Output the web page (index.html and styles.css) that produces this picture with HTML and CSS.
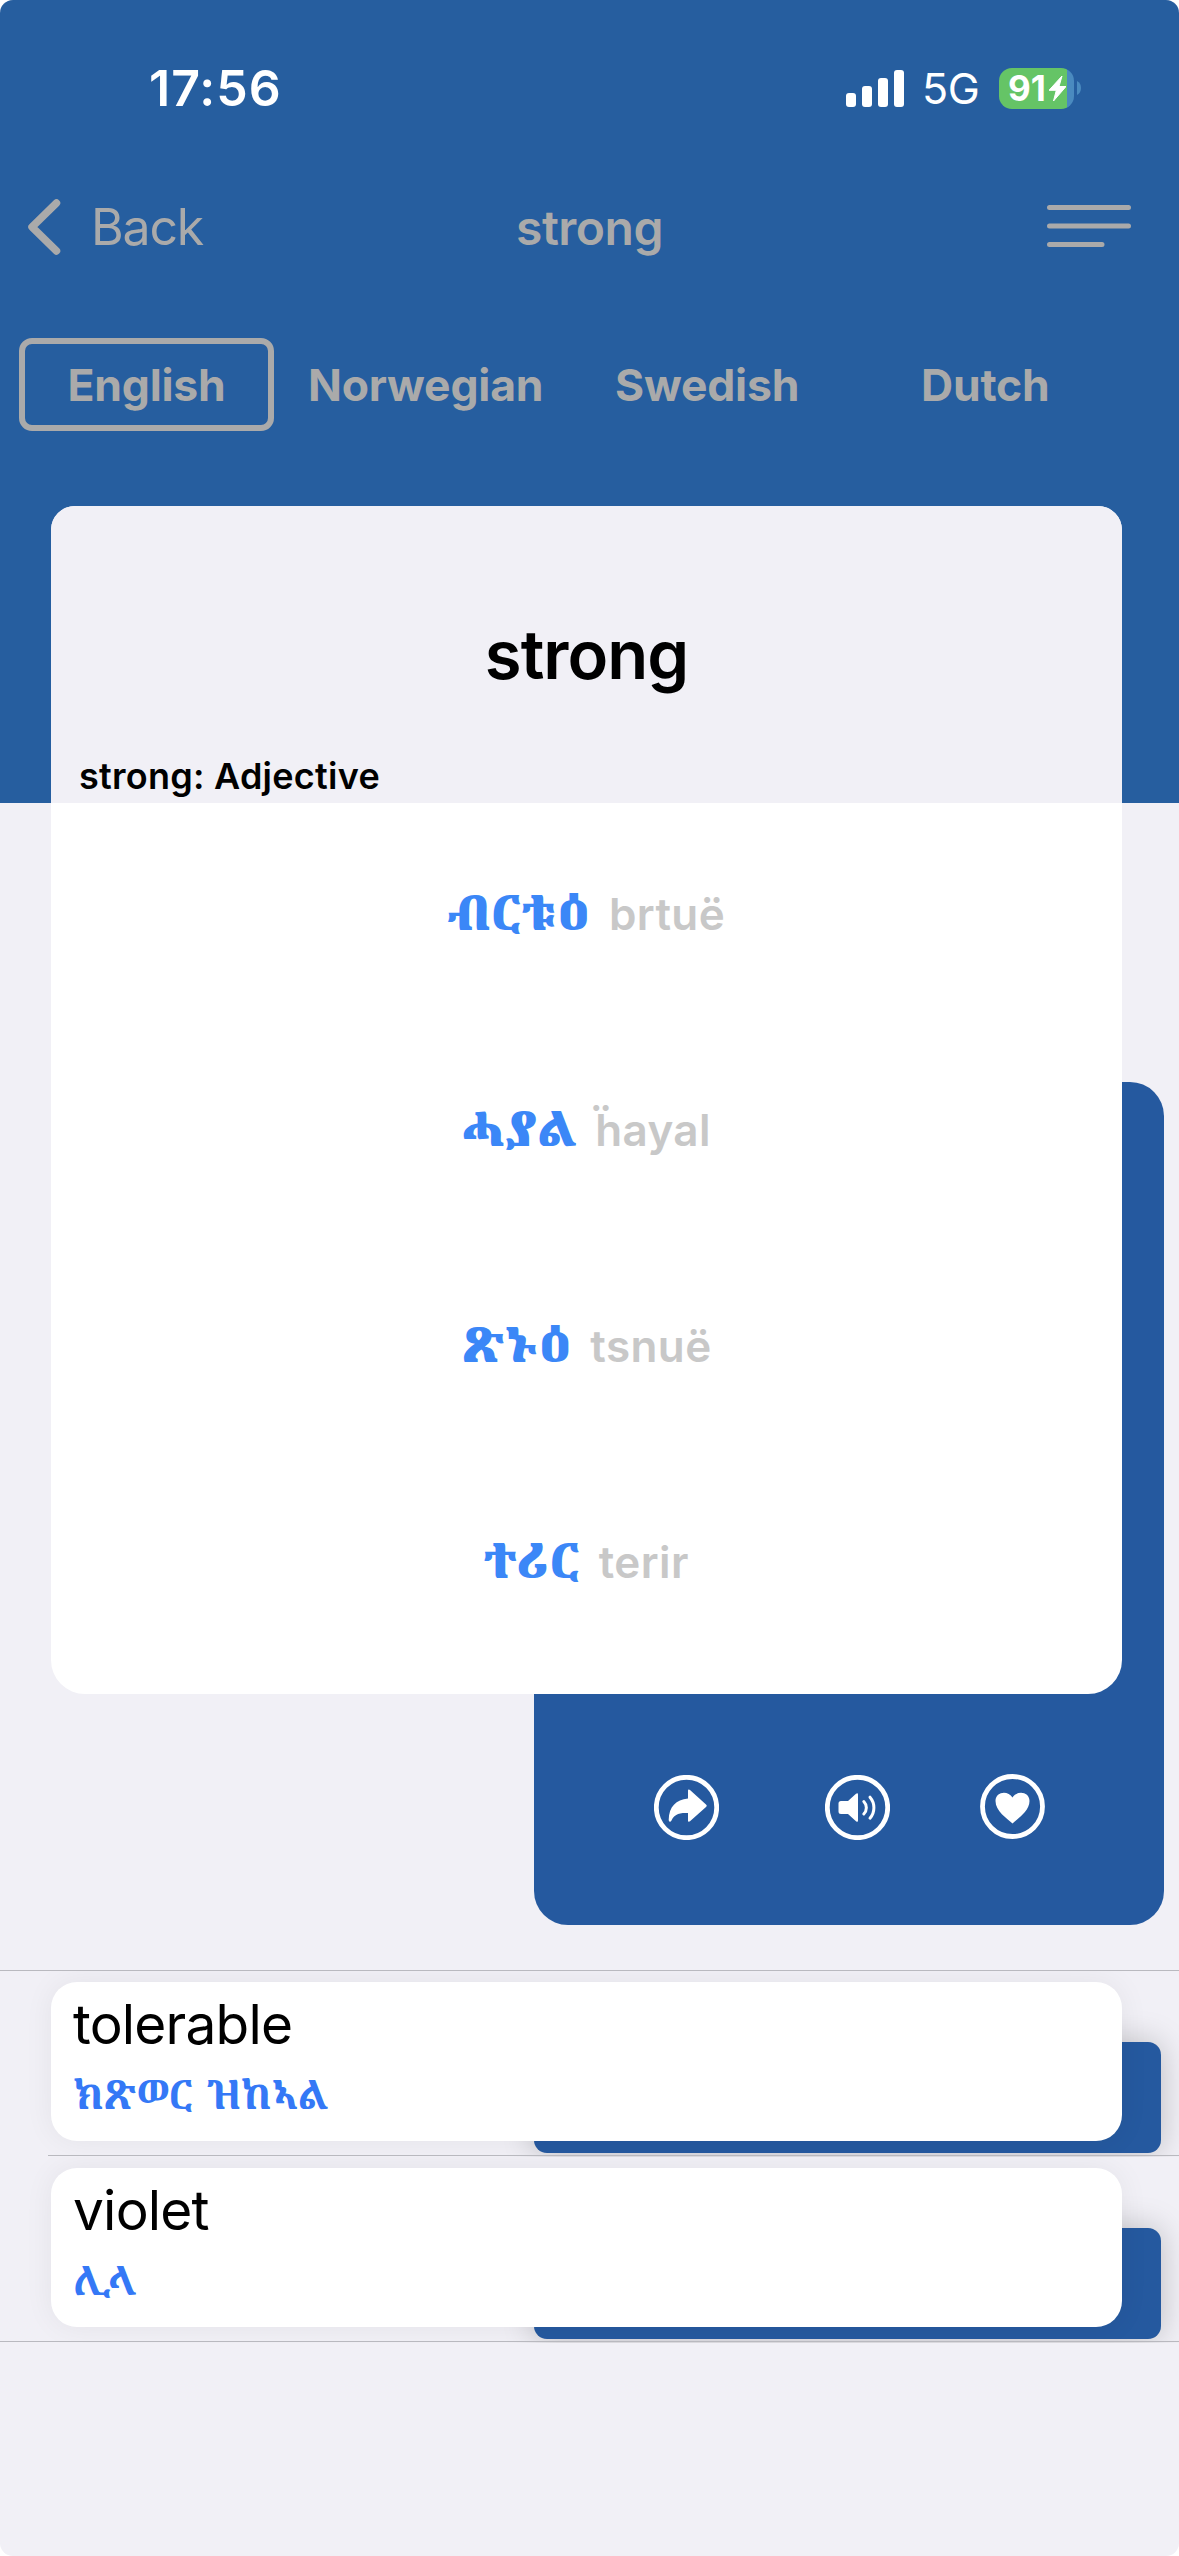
FILE: index.html
```html
<!DOCTYPE html>
<html lang="en">
<head>
<meta charset="utf-8">
<title>strong</title>
<link rel="stylesheet" href="styles.css">
</head>
<body>
<div class="screen">
  <header class="header">
    <div class="status">
      <span class="time">17:56</span>
      <div class="indicators">
        <svg class="signal" viewBox="0 0 58 37"><g fill="#fff"><rect x="0" y="23" width="10" height="14" rx="3"/><rect x="16" y="16" width="10" height="21" rx="3"/><rect x="32" y="8" width="10" height="29" rx="3"/><rect x="48" y="0" width="10" height="37" rx="3"/></g></svg>
        <span class="network">5G</span>
        <div class="battery">
          <span class="level">91</span>
          <svg class="bolt" viewBox="0 0 17 25"><path d="M13 0 0 14.300h7.300L4.500 25 17 10.500H10z" fill="#fff" stroke="#fff" stroke-width="1" stroke-linejoin="round"/></svg>
        </div>
        <svg class="nub" viewBox="0 0 4 14"><path d="M0 0Q4 2 4 7T0 14z" fill="#4a8abf"/></svg>
      </div>
    </div>
    <nav class="navbar">
      <a class="back"><svg class="chevron" viewBox="0 0 34 58"><path d="M29.500 5 5 29l24.500 24" fill="none" stroke="#aaa" stroke-width="7.500" stroke-linecap="round" stroke-linejoin="round"/></svg><span>Back</span></a>
      <h1 class="title">strong</h1>
      <svg class="menu" viewBox="0 0 84 42"><path d="M2.500 2.500h79M2.500 21h79M2.500 39.500h52.500" stroke="#aaa" stroke-width="5" stroke-linecap="round"/></svg>
    </nav>
    <div class="tabs">
      <span class="tab tab-active">English</span>
      <span class="tab norwegian">Norwegian</span>
      <span class="tab swedish">Swedish</span>
      <span class="tab dutch">Dutch</span>
    </div>
  </header>
  <main>
    <section class="featured">
      <div class="feature-card">
        <svg class="action" viewBox="0 0 65 65"><circle cx="32.500" cy="32.500" r="30.200"/><path class="solid" d="M34 16c0-1.500 1-1.800 2-.9l16 14.400c1 .9 1 1.600 0 2.500L36 46.200c-1 .9-2 .5-2-.8V38c-10-.5-14 2-16.500 7.500-1 2-2.800 1.500-2.800-.7C15 32 22 24.500 34 23.600z"/></svg>
        <svg class="action" viewBox="0 0 65 65"><circle cx="32.500" cy="32.500" r="30.200"/><path class="solid" d="M13.500 28.500q0-2.500 2.500-2.500H23l8-7.200q2-1.300 2 .7v26q0 2-2 .7L23 39h-7q-2.500 0-2.500-2.500z"/><path class="wave" d="M38.800 26.500c3.400 3.600 3.400 8.900 0 12.500M45 22.200c5.200 6 5.200 15 0 21"/></svg>
        <svg class="action" viewBox="0 0 65 65"><circle cx="32.500" cy="32.500" r="30"/><path class="solid" d="M32.500 49.500C27 44.500 15.500 37 15.500 27c0-9.500 12.500-11 17-3.500C37 16 49.500 17.500 49.500 27c0 10-11.500 17.500-17 22.500z"/></svg>
      </div>
    </section>
    <ul class="words">
      <li class="word">
        <div class="word-accent"></div>
        <div class="word-card"><span class="source">tolerable</span><span class="target" lang="ti">ክጽወር ዝከኣል</span></div>
      </li>
      <li class="word word-last">
        <div class="word-accent"></div>
        <div class="word-card"><span class="source">violet</span><span class="target" lang="ti">ሊላ</span></div>
      </li>
    </ul>
  </main>
  <section class="dialog">
    <header class="dialog-head">
      <h2 class="headword">strong</h2>
      <p class="part">strong: Adjective</p>
    </header>
    <ul class="meanings">
      <li><b lang="ti">ብርቱዕ</b><span>brtuë</span></li>
      <li><b lang="ti">ሓያል</b><span>ḧayal</span></li>
      <li><b lang="ti">ጽኑዕ</b><span>tsnuë</span></li>
      <li><b lang="ti">ተሪር</b><span>terir</span></li>
    </ul>
  </section>
</div>
</body>
</html>
```
FILE: styles.css
```css
* { box-sizing: border-box; margin: 0; padding: 0; }
body { background: #fff; font-family: Inter, "Kefa", "Noto Serif Ethiopic", "Noto Sans Ethiopic", "Noto Sans", sans-serif; }
ul { list-style: none; }
svg { display: block; flex: none; }

.screen {
  position: relative;
  width: 1179px;
  height: 2556px;
  overflow: hidden;
  border-radius: 13px;
  background: #f1f0f6;
}

.header { height: 803px; background: #265e9f; color: #aaa; }

.status {
  display: flex;
  justify-content: space-between;
  align-items: center;
  height: 176px;
  padding: 0 98px 0 149px;
  color: #fff;
}
.time { font-size: 50px; font-weight: 600; letter-spacing: 1px; }
.indicators { display: flex; align-items: center; }
.signal { width: 58px; height: 37px; }
.network { margin-left: 18px; width: 56px; font-size: 43px; line-height: 50px; letter-spacing: -.5px; }
.battery {
  display: flex;
  align-items: center;
  width: 75px;
  height: 41px;
  margin-left: 21px;
  padding-left: 9px;
  border-radius: 13px;
  background: linear-gradient(90deg, #65c466 68px, #4a8abf 68px);
}
.level { width: 41px; font-size: 35px; font-weight: 700; line-height: 41px; }
.bolt { width: 17px; height: 25px; }
.nub { width: 4px; height: 14px; margin-left: 3px; }

.navbar {
  display: grid;
  grid-template-columns: 1fr auto 1fr;
  align-items: center;
  height: 102px;
  padding: 0 48px;
}
.back { display: flex; align-items: center; gap: 30px; margin-left: -21px; font-size: 50px; font-weight: 400; letter-spacing: -1.2px; }
.chevron { width: 34px; height: 58px; }
.title { font-size: 48px; font-weight: 600; letter-spacing: -.5px; }
.menu { width: 84px; height: 42px; margin-top: -2px; justify-self: end; }

.tabs { display: flex; align-items: center; height: 93px; margin: 60px 0 0 19px; font-size: 44.5px; font-weight: 650; letter-spacing: -.2px; }
.tab-active {
  display: flex;
  align-items: center;
  justify-content: center;
  width: 255px;
  height: 93px;
  border: 6px solid #aaa;
  border-radius: 13px;
}
.norwegian { width: 305px; padding-left: 34px; }
.swedish { width: 308px; padding-left: 36px; }
.dutch { padding-left: 34px; }

.featured { display: flex; justify-content: flex-end; height: 1167px; padding: 279px 15px 45px 0; }
.feature-card {
  display: flex;
  align-items: flex-end;
  width: 630px;
  padding: 0 0 85px 120px;
  border-radius: 34px;
  background: #25599f;
}
.action { width: 65px; height: 65px; fill: none; stroke: #fff; stroke-width: 4.8; }
.action:nth-child(2) { margin-left: 106px; }
.action:nth-child(3) { margin: 0 0 1px 90px; }
.solid { fill: #fff; stroke: none; }
.wave { stroke-width: 3; stroke-linecap: round; }

.words { border-top: 1px solid #b9b9bf; }
.word { position: relative; height: 186px; padding: 11px 57px 0 51px; overflow: hidden; }
.word::after { content: ""; position: absolute; right: 0; bottom: 1px; left: 48px; height: 1px; background: #b9b9bf; }
.word-last::after { left: 0; }
.word-card {
  position: relative;
  display: flex;
  flex-direction: column;
  height: 159px;
  padding: 8px 22px;
  border-radius: 26px;
  background: #fff;
  box-shadow: 0 0 30px rgba(0, 0, 0, .06);
}
.word-accent {
  position: absolute;
  top: 71px;
  right: 18px;
  width: 627px;
  height: 111px;
  border-radius: 13px;
  background: #25599f;
  box-shadow: 0 0 32px rgba(0, 0, 0, .22);
}
.source { font-size: 55px; line-height: 68px; letter-spacing: -.8px; color: #000; }
.target { font-size: 40px; font-weight: 700; line-height: 73px; letter-spacing: -1px; word-spacing: 6px; color: #3478f6; }

.dialog {
  position: absolute;
  top: 506px;
  left: 51px;
  width: 1071px;
  height: 1188px;
  overflow: hidden;
  border-radius: 24px 24px 34px 34px;
  background: #fff;
}
.dialog-head { height: 297px; background: #f1f0f6; color: #000; }
.headword { padding-top: 107px; text-align: center; font-size: 67px; font-weight: 600; line-height: 84px; letter-spacing: -1px; }
.part { padding: 57px 0 0 28px; font-size: 36px; font-weight: 600; line-height: 44px; letter-spacing: .25px; }
.meanings li { display: flex; justify-content: center; align-items: baseline; gap: 18px; height: 216px; line-height: 220px; font-size: 44px; font-weight: 600; letter-spacing: .4px; color: #c8c8c8; }
.meanings b { font-size: 48px; letter-spacing: .6px; color: #3b87f7; }
```
